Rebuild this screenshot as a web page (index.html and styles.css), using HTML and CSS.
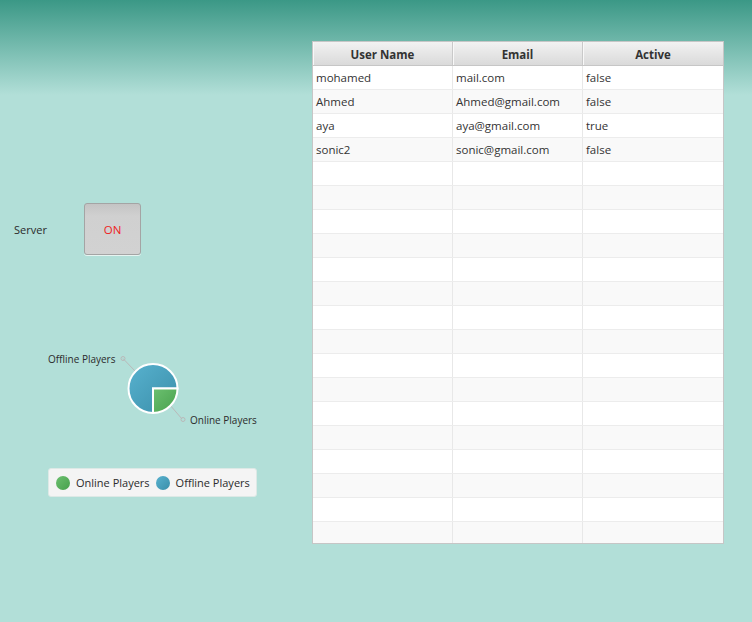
FILE: index.html
```html
<!DOCTYPE html>
<html>
<head>
<meta charset="utf-8">
<link rel="stylesheet" href="styles.css">
</head>
<body>
<div class="page">
  <div class="left">
    <div class="server-row">
      <span class="server-label">Server</span>
      <button class="toggle">ON</button>
    </div>
    <svg class="pie" width="312" height="100" viewBox="0 0 312 100">
      <defs>
        <linearGradient id="gBlue" x1="0" y1="0" x2="1" y2="1">
          <stop offset="0" stop-color="#58b2cf"/>
          <stop offset="1" stop-color="#3a8ea9"/>
        </linearGradient>
        <linearGradient id="gGreen" x1="0" y1="0" x2="1" y2="1">
          <stop offset="0" stop-color="#6cc070"/>
          <stop offset="1" stop-color="#47a04c"/>
        </linearGradient>
      </defs>
      <line x1="123" y1="18.5" x2="135" y2="31" class="leader"/>
      <circle cx="123" cy="18.5" r="2" class="leader-dot"/>
      <line x1="170" y1="65" x2="182" y2="79" class="leader"/>
      <circle cx="183" cy="79.5" r="2" class="leader-dot"/>
      <path d="M153,48.5 L153,73 A24.5,24.5 0 1 1 177.5,48.5 Z" fill="url(#gBlue)" class="slice"/>
      <path d="M153,48.5 L177.5,48.5 A24.5,24.5 0 0 1 153,73 Z" fill="url(#gGreen)" class="slice"/>
      <text x="48" y="22.5" class="pie-label">Offline Players</text>
      <text x="190" y="84" class="pie-label">Online Players</text>
    </svg>
    <div class="legend">
      <span class="dot dot-green"></span><span class="legend-text">Online Players</span>
      <span class="dot dot-blue"></span><span class="legend-text">Offline Players</span>
    </div>
  </div>
  <div class="right">
    <div class="table">
      <div class="thead">
        <div class="th">User Name</div>
        <div class="th">Email</div>
        <div class="th">Active</div>
      </div>
      <div class="tbody">
        <div class="tr"><div class="td">mohamed</div><div class="td">mail.com</div><div class="td">false</div></div>
        <div class="tr"><div class="td">Ahmed</div><div class="td">Ahmed@gmail.com</div><div class="td">false</div></div>
        <div class="tr"><div class="td">aya</div><div class="td">aya@gmail.com</div><div class="td">true</div></div>
        <div class="tr"><div class="td">sonic2</div><div class="td">sonic@gmail.com</div><div class="td">false</div></div>
        <div class="tr"><div class="td"></div><div class="td"></div><div class="td"></div></div>
        <div class="tr"><div class="td"></div><div class="td"></div><div class="td"></div></div>
        <div class="tr"><div class="td"></div><div class="td"></div><div class="td"></div></div>
        <div class="tr"><div class="td"></div><div class="td"></div><div class="td"></div></div>
        <div class="tr"><div class="td"></div><div class="td"></div><div class="td"></div></div>
        <div class="tr"><div class="td"></div><div class="td"></div><div class="td"></div></div>
        <div class="tr"><div class="td"></div><div class="td"></div><div class="td"></div></div>
        <div class="tr"><div class="td"></div><div class="td"></div><div class="td"></div></div>
        <div class="tr"><div class="td"></div><div class="td"></div><div class="td"></div></div>
        <div class="tr"><div class="td"></div><div class="td"></div><div class="td"></div></div>
        <div class="tr"><div class="td"></div><div class="td"></div><div class="td"></div></div>
        <div class="tr"><div class="td"></div><div class="td"></div><div class="td"></div></div>
        <div class="tr"><div class="td"></div><div class="td"></div><div class="td"></div></div>
        <div class="tr"><div class="td"></div><div class="td"></div><div class="td"></div></div>
        <div class="tr"><div class="td"></div><div class="td"></div><div class="td"></div></div>
        <div class="tr"><div class="td"></div><div class="td"></div><div class="td"></div></div>
      </div>
    </div>
  </div>
</div>
</body>
</html>
```

FILE: styles.css
```css
html, body {
  margin: 0;
  padding: 0;
}
body {
  width: 752px;
  height: 622px;
  overflow: hidden;
  font-family: "Open Sans", "Noto Sans", sans-serif;
  font-size: 11.5px;
  color: #333333;
  background: linear-gradient(to bottom, #3b9886 0px, #b2dfd8 95px, #b2dfd8 100%);
}
.page {
  display: flex;
  height: 622px;
}
.left {
  width: 312px;
  display: flex;
  flex-direction: column;
}
.server-row {
  margin-top: 203px;
  display: flex;
  align-items: center;
  height: 52px;
}
.server-label {
  width: 84px;
  padding-left: 14px;
  box-sizing: border-box;
  font-size: 11px;
  color: #2b2b2b;
}
.toggle {
  width: 57px;
  height: 52px;
  padding: 0;
  border: 1px solid #a4a4a4;
  border-radius: 3px;
  background: linear-gradient(to bottom, #c4c4c4 0px, #d0d0d0 12px, #d2d2d2 100%);
  box-shadow: 0 1px 0 #e6f4f1;
  color: #ee2222;
  font-family: "Open Sans", "Noto Sans", sans-serif;
  font-size: 11.5px;
}
.pie {
  display: block;
  margin-top: 85px;
}
.slice {
  stroke: #ffffff;
  stroke-width: 2;
  stroke-linejoin: miter;
}
.leader {
  stroke: #b9b9b9;
  stroke-width: 1;
}
.leader-dot {
  fill: none;
  stroke: #b9b9b9;
  stroke-width: 1;
}
.pie-label {
  font-family: "Open Sans", "Noto Sans", sans-serif;
  font-size: 10px;
  fill: #2b2b2b;
}
.legend {
  margin-top: 28px;
  margin-left: 48px;
  width: 209px;
  height: 29px;
  box-sizing: border-box;
  display: flex;
  align-items: center;
  padding-left: 7px;
  background: #f4f4f4;
  border: 1px solid #dde9e6;
  border-radius: 3px;
}
.dot {
  width: 14px;
  height: 14px;
  border-radius: 50%;
  flex: none;
}
.dot-green {
  background: linear-gradient(135deg, #6cc070, #47a04c);
}
.dot-blue {
  background: linear-gradient(135deg, #58b2cf, #3a8ea9);
  margin-left: 6px;
}
.legend-text {
  margin-left: 6px;
  font-size: 11px;
  color: #2b2b2b;
  white-space: nowrap;
}
.right {
  padding-top: 41px;
}
.table {
  width: 412px;
  box-sizing: border-box;
  border: 1px solid #c6c6c6;
  background: #ffffff;
}
.thead {
  display: grid;
  grid-template-columns: 140px 130px 140px;
  height: 24px;
  border-bottom: 1px solid #c6c6c6;
  box-sizing: border-box;
  background: linear-gradient(to bottom, #f2f2f2, #dadada);
}
.th {
  display: flex;
  align-items: center;
  justify-content: center;
  padding-top: 1px;
  font-weight: 700;
  font-size: 11.5px;
  color: #333333;
  border-right: 1px solid #c9c9c9;
  box-shadow: inset 1px 0 0 #f8f8f8;
}
.th:last-child {
  border-right: none;
}
.tbody {
  height: 477px;
  overflow: hidden;
}
.tr {
  display: grid;
  grid-template-columns: 140px 130px 140px;
  height: 24px;
  box-sizing: border-box;
  border-bottom: 1px solid #ececec;
  background: #ffffff;
}
.tr:nth-child(even) {
  background: #f9f9f9;
}
.td {
  display: flex;
  align-items: center;
  padding-left: 3px;
  border-right: 1px solid #e8e8e8;
  font-size: 11.5px;
  color: #333333;
  white-space: nowrap;
}
.td:last-child {
  border-right: none;
}
```
